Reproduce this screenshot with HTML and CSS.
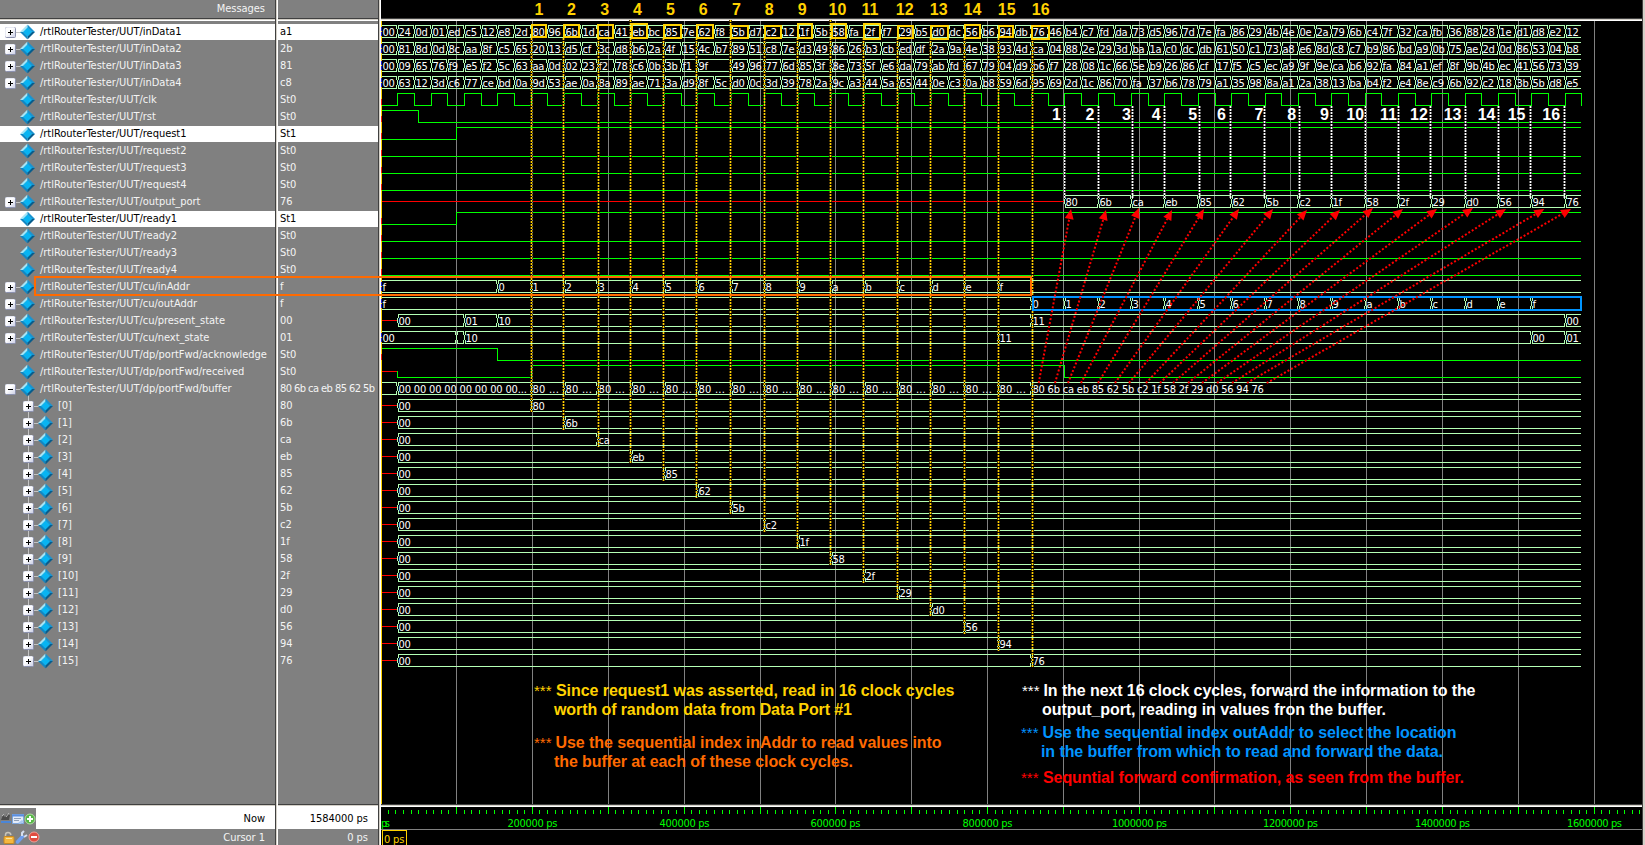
FILE: index.html
```html
<!DOCTYPE html>
<html lang="en">
<head>
<meta charset="utf-8">
<title>Wave - rtlRouterTester</title>
<link rel="stylesheet" href="styles.css">
</head>
<body>
<svg class="defs" width="0" height="0" aria-hidden="true">
  <defs>
    <linearGradient id="boxFill" x1="0" y1="0" x2="1" y2="1"><stop offset="0.4" stop-color="#ffffff"/><stop offset="1" stop-color="#c8cce4"/></linearGradient>
    <symbol id="diamond" viewBox="0 0 15 15">
      <path d="M7.5 0L0 7.5L3.5 7.5L7.5 3.5Z" fill="#a4e4f6"/>
      <path d="M7.5 0L15 7.5L11.5 7.5L7.5 3.5Z" fill="#1a93cf"/>
      <path d="M0 7.5L7.5 15L7.5 11.5L3.5 7.5Z" fill="#1187c4"/>
      <path d="M15 7.5L7.5 15L7.5 11.5L11.5 7.5Z" fill="#085d8c"/>
      <path d="M7.5 3L12 7.5L7.5 12L3 7.5Z" fill="#08b4f2"/>
    </symbol>
    <symbol id="plus" viewBox="0 0 11 11">
      <rect x="0.5" y="0.5" width="10" height="10" rx="1" fill="url(#boxFill)" stroke="#8b91ae"/>
      <path d="M0.5 9.5V1.5Q0.5 0.5 1.5 0.5H9.5" fill="none" stroke="#e8eaf4"/>
      <path d="M3 5.5H8M5.5 3V8" stroke="#000" stroke-width="1"/>
    </symbol>
    <symbol id="minus" viewBox="0 0 11 11">
      <rect x="0.5" y="0.5" width="10" height="10" rx="1" fill="url(#boxFill)" stroke="#8b91ae"/>
      <path d="M0.5 9.5V1.5Q0.5 0.5 1.5 0.5H9.5" fill="none" stroke="#e8eaf4"/>
      <path d="M3 5.5H8" stroke="#000" stroke-width="1"/>
    </symbol>
  </defs>
</svg>
<main class="viewer">
  <section class="pane names">
    <header class="head">Messages</header>
    <div class="rows" id="names"></div>
    <div class="foot now">
      <span class="tools">
        <svg width="36" height="22" viewBox="0 0 36 22">
          <path d="M1 12L3 7L5 9L7 6L10 7L9 12Z" fill="#4c4c4c"/><path d="M2 8L4 6M6 9L9 5" stroke="#b8b8b8"/><path d="M1 14H11" stroke="#4a86d8" stroke-width="2"/>
          <rect x="12.500" y="6.500" width="11" height="9" fill="#e4ecf8" stroke="#7ea6dc"/><path d="M12 7.500H24" stroke="#5b8fe0" stroke-width="2"/><path d="M14 10.500H21M14 12.500H19" stroke="#8fa0b8"/><path d="M18 15L22 12L24 14L20 16Z" fill="#a8c8f0"/>
          <circle cx="30" cy="11" r="5" fill="#58b848" stroke="#b0dca4"/><path d="M27 11H33M30 8V14" stroke="#fff" stroke-width="2"/>
        </svg>
      </span>
      <span>Now</span>
    </div>
    <div class="foot cursor">
      <span class="tools">
        <svg width="40" height="16" viewBox="0 0 40 16">
          <path d="M5.500 8V6Q5.500 3.500 8 3.500T11 6" fill="none" stroke="#c8c4b8" stroke-width="1.500"/><rect x="4" y="7.500" width="10" height="7" rx="1" fill="#f4b840" stroke="#c88820"/><path d="M6 9.500H12" stroke="#fde3a0"/>
          <path d="M17.500 13L22.500 7.500" stroke="#6f9eec" stroke-width="3.500" stroke-linecap="round"/><path d="M22 7L22 4L24 2M24 8L27 6" fill="none" stroke="#d4deee" stroke-width="2"/>
          <circle cx="34" cy="8" r="5" fill="#e04c40" stroke="#f0a098"/><path d="M31 8H37" stroke="#fff" stroke-width="2"/>
        </svg>
      </span>
      <span>Cursor 1</span>
    </div>
  </section>
  <div class="split"></div>
  <section class="pane values">
    <header class="head"></header>
    <div class="rows" id="values"></div>
    <div class="foot now"><span>1584000 ps</span></div>
    <div class="foot cursor"><span>0 ps</span></div>
  </section>
  <div class="split"></div>
  <section class="wave"><svg id="wave" width="1261" height="845" viewBox="381 0 1261 845"></svg></section>
  <div class="edge"></div>
</main>
<svg id="notes" class="notes" width="1645" height="845" viewBox="0 0 1645 845"></svg>
<script src="wave.js"></script>
</body>
</html>
```

FILE: styles.css
```css
* { box-sizing: border-box; }
html, body { margin: 0; height: 100%; overflow: hidden; background: #000; }
body {
  position: relative;
  font-family: "DejaVu Sans Condensed", "DejaVu Sans", sans-serif;
  font-stretch: condensed;
  font-size: 11px;
  letter-spacing: -0.03px;
  color: #f4f4f4;
}
.defs { position: absolute; }
.viewer { display: flex; width: 1645px; height: 845px; }
.pane { display: flex; flex-direction: column; background: #808080; overflow: hidden; }
.names { width: 275px; }
.values { width: 100px; }
.split {
  width: 3px;
  background: linear-gradient(to right, #404040 1px, #d4d0c8 1px, #d4d0c8 2px, #fff 2px);
}
.head {
  height: 21px;
  padding: 1px 10px 0 0;
  line-height: 15px;
  text-align: right;
  border-bottom: 1px solid #fff;
  box-shadow: inset 0 -1px #d4d0c8, inset 0 -2px #404040;
}
.rows { flex: 1; padding-top: 3px; border-bottom: 1px solid #404040; min-height: 0; }
.row { display: flex; align-items: center; height: 17px; white-space: pre; border-bottom: 1px solid #808080; }
.row.picked { background: #fff; color: #000; }
.row .text { line-height: 14px; padding-bottom: 1px; }
.names .row { padding-left: 5px; }
.names .row.child { padding-left: 23px; }
.names .glyph { flex: none; }
.names .text { padding-left: 5px; }
.values .row { padding-left: 2px; }
.values .tight { letter-spacing: -0.56px; }
.foot { display: flex; align-items: center; justify-content: space-between; padding-right: 10px; }
.foot span:only-child { margin-left: auto; }
.tools { display: flex; background: #808080; }
.now { height: 24px; padding-top: 2px; background: #fff; color: #000; border-top: 1px solid #d4d0c8; }
.cursor { height: 16px; }
.wave { width: 1261px; background: #000; }
.wave svg { display: block; }
.edge { width: 3px; background: linear-gradient(to right, #404040 1px, #d4d0c8 1px); }
.notes { position: absolute; left: 0; top: 0; pointer-events: none; }

.crisp { shape-rendering: crispEdges; fill: none; stroke-width: 1; }
.grid { stroke: #808080; }
.bus { stroke: #b4ffb4; }
.bit { stroke: #00ff00; }
.unknown { stroke: #ff0000; }
.label { fill: #fff; font-size: 11px; letter-spacing: -0.3px; }
.time { fill: #00ff00; font-size: 11px; }
.gold { fill: #ffd200; }
.orange { fill: #ff6a00; }
.blue { fill: #0094ff; }
.red { fill: #ff0000; }
.white { fill: #fff; }
.note, .number { font-family: "Liberation Sans", Arial, sans-serif; font-weight: bold; font-size: 16px; letter-spacing: 0; }
.stars { font-family: "Liberation Sans", Arial, sans-serif; font-size: 15px; letter-spacing: 0; }
.frame { fill: none; stroke-width: 2; }
.halo { stroke-width: 3; }
```

FILE: wave.js
```js
const TOP = 25, PITCH = 17, END = 1581;
const edge = n => Math.round(380.6 + 16.678 * n);
const top_ = r => TOP + PITCH * r;
const esc = s => s.replace(/</g, "&lt;");

// ---- signal list -------------------------------------------------------
const U = "/rtlRouterTester/UUT/";
const memory = "80 6b ca eb 85 62 5b c2 1f 58 2f 29 d0 56 94 76".split(" ");
const signals = [
  ["inData1", "a1", "plus", 1], ["inData2", "2b", "plus"], ["inData3", "81", "plus"], ["inData4", "c8", "plus"],
  ["clk", "St0"], ["rst", "St0"], ["request1", "St1", "", 1], ["request2", "St0"], ["request3", "St0"],
  ["request4", "St0"], ["output_port", "76", "plus"], ["ready1", "St1", "", 1], ["ready2", "St0"],
  ["ready3", "St0"], ["ready4", "St0"], ["cu/inAddr", "f", "plus"], ["cu/outAddr", "f", "plus"],
  ["cu/present_state", "00", "plus"], ["cu/next_state", "01", "plus"], ["dp/portFwd/acknowledge", "St0"],
  ["dp/portFwd/received", "St0"], ["dp/portFwd/buffer", "80 6b ca eb 85 62 5b", "minus"]
];
function glyph(kind, child) {
  let s = '<svg class="glyph" width="30" height="17" viewBox="0 0 30 17">';
  if (child) s += '<path d="M5.500 0V4' + (child === "last" ? "" : "M5.500 14V17") + '" stroke="#c4c4c4"/>';
  if (kind === "minus") s += '<path d="M23.500 13V17" stroke="#c4c4c4"/>';
  if (kind) s += '<path d="M11 8.500H16" stroke="#c4c4c4"/><use href="#' + kind + '" x="0" y="3" width="11" height="11"/>';
  return s + '<use href="#diamond" x="15" y="0.500" width="15" height="15"/></svg>';
}
let names = "", values = "";
signals.forEach(([n, v, kind, picked]) => {
  const c = picked ? " picked" : "";
  names += `<div class="row${c}">${glyph(kind)}<span class="text">${U}${n}</span></div>`;
  values += `<div class="row${c}"><span class="text${v.length > 4 ? " tight" : ""}">${v}</span></div>`;
});
memory.forEach((v, i) => {
  names += `<div class="row child">${glyph("plus", i === 15 ? "last" : "mid")}<span class="text">[${i}]</span></div>`;
  values += `<div class="row"><span class="text">${v}</span></div>`;
});
document.getElementById("names").innerHTML = names;
document.getElementById("values").innerHTML = values;

// ---- waveforms ---------------------------------------------------------
let out = "";
const path = (cls, d) => { out += `<path class="crisp ${cls}" d="${d}"/>`; };
const text = (x, y, s, cls = "label", len) => {
  out += `<text x="${x}" y="${y}" class="${cls}"${len ? ` textLength="${len}"` : ""}>${esc(s)}</text>`;
};
const gridX = [456, 532, 608, 684, 760, 835, 911, 987, 1063, 1139, 1214, 1290, 1366, 1442, 1518, 1594];
path("grid", gridX.map(x => `M${x}.5 21V804`).join(""));

// segments: [startX, label, labelLength]
function bus(row, segs) {
  const t = top_(row), a = t + 0.5, b = t + 12.5;
  let d = "";
  segs.forEach(([x, label, len], i) => {
    const last = i === segs.length - 1;
    const x0 = i || x > 381 ? x + 1.5 : x + 0.5;
    const x1 = last ? END : segs[i + 1][0] - 0.5;
    d += `M${x0} ${a}H${x1}M${x0} ${b}H${x1}`;
    if (x > 381) d += `M${x0} ${t}V${t + 4}M${x + 0.5} ${t + 4}V${t + 9}M${x0} ${t + 9}V${t + 13}`;
    if (!last) d += `M${x1} ${t}V${t + 4}M${x1 + 1} ${t + 4}V${t + 9}M${x1} ${t + 9}V${t + 13}`;
    if (label) text(x + 1.5, t + 11, label, "label", len);
  });
  path("bus", d);
}
function unknown(row, to) { path("unknown", `M381 ${top_(row) + 6.5}H${to}`); }
function bit(row, start, changes) {
  const y = v => top_(row) + (v ? 0.5 : 12.5);
  let d = `M381 ${y(start)}`, v = start;
  changes.forEach(x => { v = !v; d += `H${x + 0.5}V${y(v)}`; });
  path("bit", d + `H${END}`);
}
const data = [
  "00 24 0d 01 ed c5 12 e8 2d 80 96 6b 1d ca 41 eb bc 85 7e 62 f8 5b d7 c2 12 1f 5b 58 fa 2f f7 29 b5 d0 dc 56 b6 94 db 76 46 b4 c7 fd da 73 d5 96 7d 7e fa 86 29 4b 4e 0e 2a 79 6b c4 7f 32 ca fb 36 88 28 1e d1 d8 e2 12",
  "00 81 8d 0d 8c aa 8f c5 65 20 13 d5 cf 3c d8 b6 2a 4f 15 4c b7 89 51 c8 7e d3 49 86 26 b3 cb ed df 2a 9a 4e 38 93 4d ca 04 88 2e 29 3d ba 1a c0 dc db 61 50 c1 73 a8 e6 8d c8 c7 b9 86 bd a9 0b 75 ae 2d 0d 86 53 04 b8",
  "00 09 65 76 f9 e5 f2 5c 63 aa 0d 02 23 f2 78 c6 0b 3b f1 9f - 49 96 77 6d 85 3f 8e 73 5f e6 da 79 ab fd 67 79 04 d9 b6 f7 28 08 1c 66 5e b9 26 86 cf 17 f5 c5 ec a9 9f 9e ca b6 92 fa 84 a1 ef 8f 9b 4b ec 41 56 73 39",
  "00 63 12 3d c6 77 ce bd 0a 9d 53 ae 0a 8a 89 ae 71 3a d9 8f 5c d0 0c 3d 39 78 2a 9c a3 44 5a 65 44 0e c3 0a b8 59 6d 95 69 2d 1c 86 70 fa 37 b6 78 79 a1 35 98 8a a1 2a 38 13 ba b4 f2 e4 8e c9 6b 92 c2 18 3b 5b d8 e5"
];
data.forEach((line, r) => {
  bus(r, line.split(" ").map((v, n) => [edge(n), v]).filter(s => s[1] !== "-"));
});
bit(4, false, Array.from({ length: 72 }, (_, i) => edge(i + 1)));
bit(5, true, [418]);
bit(6, false, [456]);
[7, 8, 9, 12, 13, 14].forEach(r => bit(r, false, []));
unknown(10, 1064);
bus(10, memory.map((v, k) => [edge(41 + 2 * k), v]));
bit(11, false, [456]);
const hex = "0123456789abcdef".split("");
bus(15, [[381, "f"], [edge(7), "0"], ...hex.slice(1).map((h, k) => [edge(9 + 2 * k), h])]);
bus(16, [[381, "f"], ...hex.map((h, k) => [edge(39 + 2 * k), h])]);
unknown(17, 397);
bus(17, [[397, "00"], [464, "01"], [497, "10"], [edge(39), "11"], [edge(71), "00"]]);
bus(18, [[381, "00"], [456, ""], [464, "10"], [edge(37), "11"], [edge(69), "00"], [edge(71), "01"]]);
bit(19, true, [497]);
unknown(20, 397);
path("bit", `M397.5 371V377.5H531.5V365.5H1064.5V377.5H${END}`);
const partial = memory.slice(0, 15).map((v, k) => [edge(9 + 2 * k), "80 ...", 26]);
bus(21, [[381, ""], [397, "00 00 00 00 00 00 00 00...", 128], ...partial, [edge(39), memory.join(" "), 231]]);
memory.forEach((v, k) => {
  unknown(22 + k, 397);
  bus(22 + k, [[397, "00"], [edge(9 + 2 * k), v]]);
});

// cursor line at time zero, colour-keyed against each trace
out += '<path class="crisp" d="M381.5 21V807" stroke="#ffd200"/>';
for (let r = 0; r < 38; r++) {
  const t = top_(r), isBus = r < 4 || [15, 16, 18].includes(r);
  const isBit = (r > 3 && r < 15 && r !== 10) || r === 19;
  if (isBus) out += `<path class="crisp" d="M381.5 ${t + 2}V${t + 12}" stroke="#2020d0" stroke-dasharray="4 1"/>`;
  if (isBit) out += `<path class="crisp" d="M381.5 ${t + 6}V${t + 12}" stroke="#ff2000"/>`;
}

// frame lines and time axis
out += `<g class="crisp"><path d="M381 18.500H1642M381 804.500H1642" stroke="#404040"/><path d="M381 19.500H1642M381 805.500H1642" stroke="#d4d0c8"/><path d="M381 20.500H1642M381 806.500H1642" stroke="#fff"/><path d="M381 829.500H1642" stroke="#808080"/></g>`;
let ticks = "";
for (let n = 1; n <= 166; n++) {
  if (n % 10 === 0) ticks += `M${gridX[n / 10 - 1]}.5 807V814`;
  else ticks += `M${Math.floor(380.7 + 7.585 * n)}.5 810V814`;
}
path("bit", ticks);
text(381, 827, "ps", "time", 9);
for (let k = 2; k <= 16; k += 2) {
  const len = k < 10 ? 50 : 55;
  text(gridX[k - 1] - len / 2 + 0.5, 827, k + "00000 ps", "time", len);
}
out += '<rect x="382.500" y="830.500" width="24" height="18" class="crisp" stroke="#ffd200"/>';
text(384, 843, "0 ps", "label gold", 20);
document.getElementById("wave").innerHTML = out;

// ---- annotations -------------------------------------------------------
out = "";
const dotted = (x, y0, y1, bright, dim) => {
  out += `<path class="crisp halo" d="M${x} ${y0}V${y1}" stroke="${dim}" stroke-dasharray="2 1"/>` +
    `<path class="crisp" d="M${x} ${y0}V${y1}" stroke="${bright}" stroke-dasharray="2 1"/>`;
};
const readX = [531, 563, 598, 630, 663, 696, 730, 764, 797, 830, 863, 897, 930, 964, 998, 1032];
readX.forEach((x, k) => dotted(x + 0.5, [3, 6, 9].includes(k) ? 20 : 38, 413 + 17 * k, "#ffd200", "#5a4200"));
const writeX = [1064, 1098, 1132, 1164, 1199, 1230, 1264, 1299, 1331, 1365, 1398, 1430, 1465, 1498, 1530, 1564];
writeX.forEach(x => dotted(x + 0.5, 106, 199, "#ffffff", "#686868"));

const boxes = [
  [531.3, 24, 547.3, 37.7], [563.3, 24, 580, 37.5], [597, 24, 614, 38.7], [630.7, 23.3, 648, 38.5],
  [663.3, 24, 681.7, 38.7], [696.3, 24, 714, 38.5], [730.3, 24.7, 749, 38.7], [764.3, 25, 781.7, 38.7],
  [796.7, 23.3, 813, 38.7], [830.7, 23.3, 847, 38.7], [863, 23.3, 881, 39.7], [897.3, 25, 913.7, 38.7],
  [929.7, 25, 949, 39.7], [964, 24.3, 981, 38.7], [998.3, 24.7, 1014, 37.5], [1031, 25, 1049.5, 39.7]
];
boxes.forEach(([a, b, c, d]) => {
  a = Math.round(a); b = Math.round(b); c = Math.round(c); d = Math.round(d);
  out += `<rect class="frame" x="${a + 1}" y="${b + 1}" width="${c - a - 2}" height="${d - b - 2}" stroke="#ffd200"/>`;
});
const readNum = [535, 567.5, 600.8, 633.5, 666.5, 699.3, 732.5, 765.3, 798.2, 829, 862, 896.3, 930.3, 964, 998.3, 1032.3];
readNum.forEach((x, k) => text(x - 0.5, 14.5, String(k + 1), "number gold"));
const writeNum = [1052, 1085.5, 1122, 1151.7, 1188.2, 1217, 1254.5, 1287.2, 1320, 1346.3, 1380, 1410, 1443.7, 1477.7, 1507.7, 1542.3];
writeNum.forEach((x, k) => text(x, 119.5, String(k + 1), "number white"));

out += '<rect class="frame" x="35" y="277" width="996" height="18" stroke="#ff6a00"/>';
out += '<rect class="frame" x="1033" y="297" width="548" height="13" stroke="#0094ff"/>';

const arrows = [
  [1038.7, 1071, 209], [1055, 1106, 210], [1068, 1139, 208], [1081, 1172, 210], [1098, 1204, 209], [1115, 1239, 209],
  [1129, 1273, 209], [1146, 1307, 210], [1160, 1340, 210], [1173, 1373, 208], [1188, 1403, 209], [1202, 1437, 209],
  [1217, 1473, 208], [1232, 1506, 209], [1247, 1544.3, 209], [1266.7, 1571, 209]
];
arrows.forEach(([x0, x, y]) => {
  const dx = x - x0, dy = y - 383, l = Math.hypot(dx, dy), ux = dx / l, uy = dy / l;
  const bx = x - ux * 10, by = y - uy * 10;
  const p = s => `${(bx - s * uy * 4.5).toFixed(1)} ${(by + s * ux * 4.5).toFixed(1)}`;
  out += `<path d="M${x0} 383L${bx.toFixed(1)} ${by.toFixed(1)}" stroke="#ff0000" stroke-width="2" stroke-dasharray="2 2"/>` +
    `<path d="M${x} ${y}L${p(1)}L${p(-1)}Z" fill="#ff0000"/>`;
});

const notes = [
  ["gold", 534, 556, 695.5, 398.5, "Since request1 was asserted, read in 16 clock cycles"],
  ["gold", 0, 554, 714.5, 298, "worth of random data from Data Port #1"],
  ["orange", 534, 555.5, 747.5, 386, "Use the sequential index inAddr to read values into"],
  ["orange", 0, 554, 766.5, 299, "the buffer at each of these clock cycles."],
  ["white", 1022, 1043.5, 695.5, 432, "In the next 16 clock cycles, forward the information to the"],
  ["white", 0, 1042, 714.5, 344, "output_port, reading in values fron the buffer."],
  ["blue", 1021, 1042.5, 737.5, 414, "Use the sequential index outAddr to select the location"],
  ["blue", 0, 1041, 756.5, 402, "in the buffer from which to read and forward the data."],
  ["red", 1021, 1043, 782.5, 421, "Sequntial forward confirmation, as seen from the buffer."]
];
notes.forEach(([c, sx, x, y, len, s]) => {
  if (sx) text(sx, y, "***", "stars " + c);
  text(x, y, s, "note " + c, len);
});
document.getElementById("notes").innerHTML = out;
```
